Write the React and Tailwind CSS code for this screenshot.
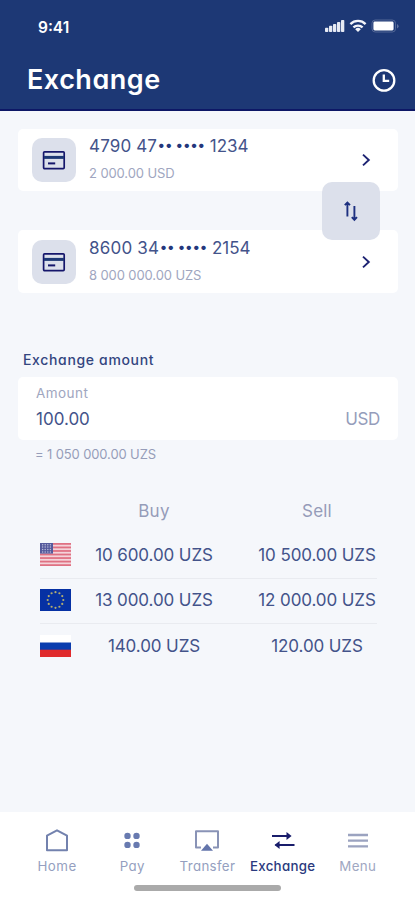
import React from "react";

const CardIcon = () => (
  <svg width="24" height="24" viewBox="0 0 24 24" fill="none" stroke="#15166b" strokeWidth="1.7">
    <rect x="1.6" y="3.8" width="20.6" height="16.8" rx="1" />
    <path d="M2 9.4h20" stroke="#1d3875" strokeWidth="3" />
    <path d="M6 15.4h7.2" strokeWidth="2" />
  </svg>
);

const Dots = ({ children }) => (
  <span className="text-[14px] font-semibold leading-[20px] tracking-[0.3px]">{children}</span>
);

const Account = ({ start, end, balance, className, startClass }) => (
  <div className={`flex items-center rounded-[5px] bg-white pl-[14px] pr-[26px] ${className}`}>
    <div className="flex size-[44px] items-center justify-center rounded-[10px] bg-[#dce0eb]">
      <CardIcon />
    </div>
    <div className="ml-[13px] flex h-full grow flex-col pt-[6px]">
      <div className="flex whitespace-pre text-[17px] leading-[22px] text-[#43538a]">
        <span className={startClass}>{start}</span>
        <span className="flex w-[52px] gap-[3.3px] text-[#24377c]">
          <Dots>••</Dots>
          <Dots>••••</Dots>
        </span>
        <span>{end}</span>
      </div>
      <div className="mt-[6px] whitespace-pre text-[13px] leading-[20px] tracking-[-0.1px] text-[#a0a6c0]">{balance}</div>
    </div>
    <svg width="12" height="16" viewBox="0 0 12 16" fill="none" stroke="#1c2272" strokeWidth="1.9">
      <path d="M3 2.6 8.8 8 3 13.4" />
    </svg>
  </div>
);

const FlagUS = () => (
  <svg width="31" height="23" viewBox="0 0 31 23">
    <rect width="31" height="23" fill="#f4d3da" />
    {[0, 1, 2, 3, 4, 5, 6].map((i) => (
      <rect key={i} y={i * 3.54} width="31" height="1.77" fill="#df7183" />
    ))}
    <rect width="13" height="10.6" fill="#555a9c" />
    {[0, 1, 2, 3].map((r) =>
      [0, 1, 2, 3].map((c) => (
        <circle key={`${r}-${c}`} cx={2.6 + c * 2.6} cy={1.7 + r * 2.4} r="0.75" fill="#b9bbd9" />
      ))
    )}
  </svg>
);

const stars = Array.from({ length: 12 }, (_, i) => (i * Math.PI) / 6);

const FlagEU = () => (
  <svg width="31" height="22" viewBox="0 0 31 22">
    <rect width="31" height="22" fill="#0631a4" />
    {stars.map((a) => (
      <circle key={a} cx={15.5 + 7.8 * Math.cos(a)} cy={11 + 7.8 * Math.sin(a)} r="1.1" fill="#b3ad70" />
    ))}
  </svg>
);

const FlagRU = () => (
  <svg width="31" height="22" viewBox="0 0 31 22">
    <rect width="31" height="8" fill="#fff" />
    <rect y="7.5" width="31" height="7.5" fill="#0a3cae" />
    <rect y="14.7" width="31" height="7.3" fill="#e02a2c" />
  </svg>
);

const Rate = ({ flag, buy, sell, last }) => (
  <div className={`grid h-[45.5px] grid-cols-[31px_166px_160px] items-center text-center text-[17px] tracking-[-0.1px] text-[#43538a] ${last ? "" : "border-b border-[#e9ebf0]"}`}>
    <div className="pb-[1px]">{flag}</div>
    <div className="whitespace-pre">{buy}</div>
    <div className="whitespace-pre">{sell}</div>
  </div>
);

const Tab = ({ icon, label, className }) => (
  <div className="flex w-[75.2px] flex-col items-center">
    <div className="flex h-[28px] items-center justify-center">{icon}</div>
    <div className={`mt-[2px] whitespace-pre text-[13.3px] leading-[20px] ${className}`}>{label}</div>
  </div>
);

export default function App() {
  return (
    <div className="flex h-[900px] w-[415px] flex-col bg-[#f5f7fb] font-[Inter,sans-serif] [font-feature-settings:'cv11']">
      <header className="h-[111px] border-b-2 border-[#0d1766] bg-[#1d3875] text-white">
        <div className="flex items-center justify-between pl-[38px] pr-[16px] pt-[17px]">
          <div className="text-[15.5px] font-semibold leading-[22px]">9:41</div>
          <div className="-mt-[4px] flex items-center">
            <svg width="20" height="14" viewBox="0 0 20 14" fill="#e6eaf4">
              <rect x="0" y="8.8" width="3.3" height="4.2" rx="0.8" />
              <rect x="4" y="6.8" width="3.3" height="6.2" rx="0.8" />
              <rect x="8" y="5" width="3.3" height="8" rx="0.8" />
              <rect x="12" y="3" width="3.3" height="10" rx="0.8" />
              <rect x="16" y="1" width="3.3" height="12" rx="0.8" />
            </svg>
            <svg className="ml-[4.5px]" width="18" height="14" viewBox="0 0 18 14" fill="none" stroke="#f3f5fa" strokeWidth="2.3">
              <path d="M1.4 5.1a10.8 10.8 0 0 1 15.2 0" />
              <path d="M4.4 8.4a6.6 6.6 0 0 1 9.2 0" />
              <path d="M9 13 6.2 10.2a4 4 0 0 1 5.6 0z" fill="#f3f5fa" stroke="none" />
            </svg>
            <svg className="ml-[4px]" width="28" height="14" viewBox="0 0 28 14">
              <rect x="1" y="1" width="23.5" height="12" rx="3.2" fill="none" stroke="#536797" />
              <rect x="2.4" y="2.6" width="20.2" height="8.8" rx="1.4" fill="#fff" />
              <path d="M26 5v4.4q1.6-.8 1.6-2.2T26 5z" fill="#60739f" />
            </svg>
          </div>
        </div>
        <div className="mt-[23px] flex items-center justify-between pl-[27px] pr-[18px]">
          <h1 className="text-[27px] font-semibold leading-[36px] tracking-[0.5px]">Exchange</h1>
          <svg width="26" height="26" viewBox="0 0 26 26" fill="none" stroke="#fff" strokeWidth="2.3">
            <circle cx="13" cy="13.4" r="10.3" />
            <path d="M12.8 7.6v6.2h5.4" />
          </svg>
        </div>
      </header>

      <main className="flex grow flex-col pl-[18px] pr-[17px] pt-[18px]">
        <div className="relative flex flex-col gap-[39px]">
          <Account start="4790 47" end="1234" balance="2 000.00 USD" className="h-[62px]" startClass="w-[68.8px] tracking-[0.15px]" />
          <Account start="8600 34" end="2154" balance="8 000 000.00 UZS" className="h-[63px] pt-px" startClass="w-[71px] tracking-[0.2px]" />
          <button className="absolute right-[18px] top-[53px] flex size-[58px] items-center justify-center rounded-[10px] bg-[#dce0eb]">
            <svg width="16" height="22" viewBox="0 0 16 22" fill="none" stroke="#1d3080" strokeWidth="1.9">
              <path d="M4.4 16.5V3.2M1.8 5.2l2.6-2.6L7 5.2" />
              <path d="M11.4 6v13.2M8.8 17.2l2.6 2.6 2.6-2.6" />
            </svg>
          </button>
        </div>

        <div className="mt-[57px] pl-[5px] text-[14px] font-medium leading-[20px] tracking-[0.66px] text-[#33457f]">Exchange amount</div>
        <div className="mt-[7px] h-[63px] rounded-[5px] bg-white px-[18px] pt-[6px]">
          <div className="text-[13.5px] leading-[20px] tracking-[0.45px] text-[#a0a6c0]">Amount</div>
          <div className="mt-[5px] flex justify-between text-[17px] leading-[22px]">
            <span className="text-[#43538a]">100.00</span>
            <span className="tracking-[-0.4px] text-[#959dbb]">USD</span>
          </div>
        </div>
        <div className="mt-[4px] whitespace-pre pl-[17px] text-[13px] leading-[20px] tracking-[-0.12px] text-[#969db9]">= 1 050 000.00 UZS</div>

        <div className="mt-[34px] pl-[22px] pr-[21px]">
          <div className="grid h-[35px] grid-cols-[31px_166px_160px] text-center text-[17px] leading-[26px] text-[#959cb9]">
            <span />
            <span className="tracking-[0.3px]">Buy</span>
            <span className="tracking-[0.2px]">Sell</span>
          </div>
          <Rate flag={<FlagUS />} buy="10 600.00 UZS" sell="10 500.00 UZS" />
          <Rate flag={<FlagEU />} buy="13 000.00 UZS" sell="12 000.00 UZS" />
          <Rate flag={<FlagRU />} buy="140.00 UZS" sell="120.00 UZS" last />
        </div>
      </main>

      <nav className="flex h-[88px] flex-col items-center bg-white pt-[14px]">
        <div className="flex h-[58px] w-[376px]">
          <Tab
            label="Home"
            className="tracking-[0.5px] text-[#959fc0]"
            icon={
              <svg width="26" height="26" viewBox="0 0 26 26" fill="none" stroke="#7382ae" strokeWidth="2">
                <path d="M3 8.7 13 3.3l10 5.4v14.5H3z" strokeLinejoin="round" />
              </svg>
            }
          />
          <Tab
            label="Pay"
            className="tracking-[0.4px] text-[#959fc0]"
            icon={
              <svg width="18" height="18" viewBox="0 0 18 18" fill="#687ab0">
                <circle cx="4.5" cy="4.9" r="3.2" />
                <circle cx="13.5" cy="4.9" r="3.2" />
                <circle cx="4.5" cy="13.9" r="3.2" />
                <circle cx="13.5" cy="13.9" r="3.2" />
              </svg>
            }
          />
          <Tab
            label="Transfer"
            className="tracking-[0.35px] text-[#959fc0]"
            icon={
              <svg width="28" height="26" viewBox="0 0 28 26" fill="none" stroke="#8993b6" strokeWidth="2">
                <path d="M8 20.4H3V4.2h22v16.2h-5" strokeLinejoin="round" />
                <path d="M14 16.8 20 23.8H8z" fill="#6375ab" stroke="none" />
              </svg>
            }
          />
          <Tab
            label="Exchange"
            className="font-medium tracking-[0.3px] text-[#2a3a7e]"
            icon={
              <svg width="26" height="22" viewBox="0 0 26 22" fill="none" stroke="#191d6b" strokeWidth="2">
                <path d="M2 7h17M5.5 16h19" />
                <path d="M16.5 3 21.6 7 16.5 11z M9.6 12 4.5 16l5.1 4z" fill="#191d6b" stroke="none" />
              </svg>
            }
          />
          <Tab
            label="Menu"
            className="tracking-[0.4px] text-[#a0a7c2]"
            icon={
              <svg width="22" height="18" viewBox="0 0 22 18" fill="none" stroke="#9ba3c0" strokeWidth="2.3">
                <path d="M1 4h20M1 9.7h20M1 15.4h20" />
              </svg>
            }
          />
        </div>
        <div className="mt-[1px] h-[6px] w-[147px] rounded-full bg-[#aaaaaa]" />
      </nav>
    </div>
  );
}
